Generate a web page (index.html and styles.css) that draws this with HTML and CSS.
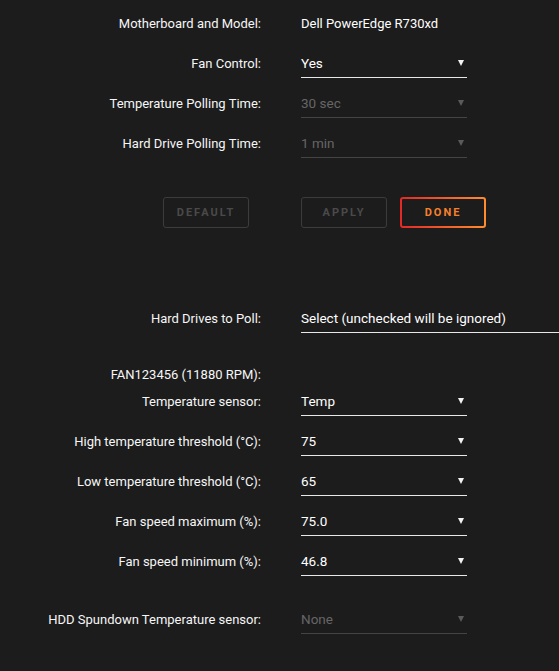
FILE: index.html
```html
<!doctype html>
<html lang="en">
<head>
    <meta charset="UTF-8">
    <title>Fan Auto Control</title>
    <link rel="stylesheet" href="styles.css">
</head>
<body>
<div class="content">
    <div class="row">
        <div class="label">Motherboard and Model:</div>
        <div class="value">Dell PowerEdge R730xd</div>
    </div>
    <div class="row">
        <div class="label">Fan Control:</div>
        <div class="value"><div class="select">Yes</div></div>
    </div>
    <div class="row">
        <div class="label">Temperature Polling Time:</div>
        <div class="value"><div class="select disabled">30 sec</div></div>
    </div>
    <div class="row">
        <div class="label">Hard Drive Polling Time:</div>
        <div class="value"><div class="select disabled">1 min</div></div>
    </div>

    <div class="row buttons">
        <div class="label"><a class="btn off default">Default</a></div>
        <div class="value">
            <a class="btn off">Apply</a>
            <a class="btn done">Done</a>
        </div>
    </div>

    <div class="row drives">
        <div class="label">Hard Drives to Poll:</div>
        <div class="value"><div class="select wide">Select (unchecked will be ignored)</div></div>
    </div>

    <div class="row fan">
        <div class="label">FAN123456 (11880 RPM):</div>
    </div>
    <div class="row">
        <div class="label">Temperature sensor:</div>
        <div class="value"><div class="select">Temp</div></div>
    </div>
    <div class="row">
        <div class="label">High temperature threshold (&deg;C):</div>
        <div class="value"><div class="select">75</div></div>
    </div>
    <div class="row">
        <div class="label">Low temperature threshold (&deg;C):</div>
        <div class="value"><div class="select">65</div></div>
    </div>
    <div class="row">
        <div class="label">Fan speed maximum (%):</div>
        <div class="value"><div class="select">75.0</div></div>
    </div>
    <div class="row">
        <div class="label">Fan speed minimum (%):</div>
        <div class="value"><div class="select">46.8</div></div>
    </div>

    <div class="row spundown">
        <div class="label">HDD Spundown Temperature sensor:</div>
        <div class="value"><div class="select disabled">None</div></div>
    </div>
</div>
</body>
</html>
```

FILE: styles.css
```css
* {
    padding: 0;
    margin: 0;
    box-sizing: border-box;
}

body {
    background: #1c1c1c;
    color: #f6f6f6;
    font-family: Roboto, "Liberation Sans", sans-serif;
    font-size: 13px;
    overflow: hidden;
}

.content {
    padding-top: 8px;
}

.row {
    display: flex;
    align-items: center;
    height: 30px;
    margin-bottom: 10px;
}

.label {
    width: 261px;
    flex: none;
    text-align: right;
}

.value {
    margin-left: 40px;
    flex: 1;
    display: flex;
    align-items: center;
    color: #fff;
}

.select {
    position: relative;
    width: 166px;
    height: 30px;
    line-height: 31px;
    font-size: 13.5px;
    color: #fff;
    border-bottom: 1px solid #e8e8e8;
}

.select::after {
    content: "";
    position: absolute;
    right: 3px;
    top: 12px;
    border-left: 3px solid transparent;
    border-right: 3px solid transparent;
    border-top: 6px solid #f2f2f2;
}

.select.disabled {
    color: #666;
    border-bottom-color: #444;
}

.select.disabled::after {
    border-top-color: #5a5a5a;
}

.select.wide {
    flex: 1;
    width: auto;
}

.select.wide::after {
    display: none;
}

.buttons {
    margin-top: 39px;
    height: 31px;
    margin-bottom: 75px;
}

.buttons .label {
    display: flex;
    justify-content: flex-end;
    padding-right: 12px;
}

.btn {
    display: block;
    width: 86px;
    height: 31px;
    line-height: 29px;
    text-align: center;
    font-size: 11px;
    font-weight: bold;
    letter-spacing: 2px;
    text-transform: uppercase;
    border: 1px solid #3c3c3c;
    border-radius: 3px;
    color: #4a4a4a;
}

.btn.done {
    margin-left: 13px;
    border: 2px solid transparent;
    line-height: 27px;
    background: linear-gradient(#1c1c1c, #1c1c1c) padding-box,
        linear-gradient(90deg, #e22828, #ff8c2f) border-box;
    color: #f7802c;
}

.fan {
    margin-top: 31px;
    height: 20px;
    margin-bottom: 2px;
}

.spundown {
    margin-top: 28px;
}
```
